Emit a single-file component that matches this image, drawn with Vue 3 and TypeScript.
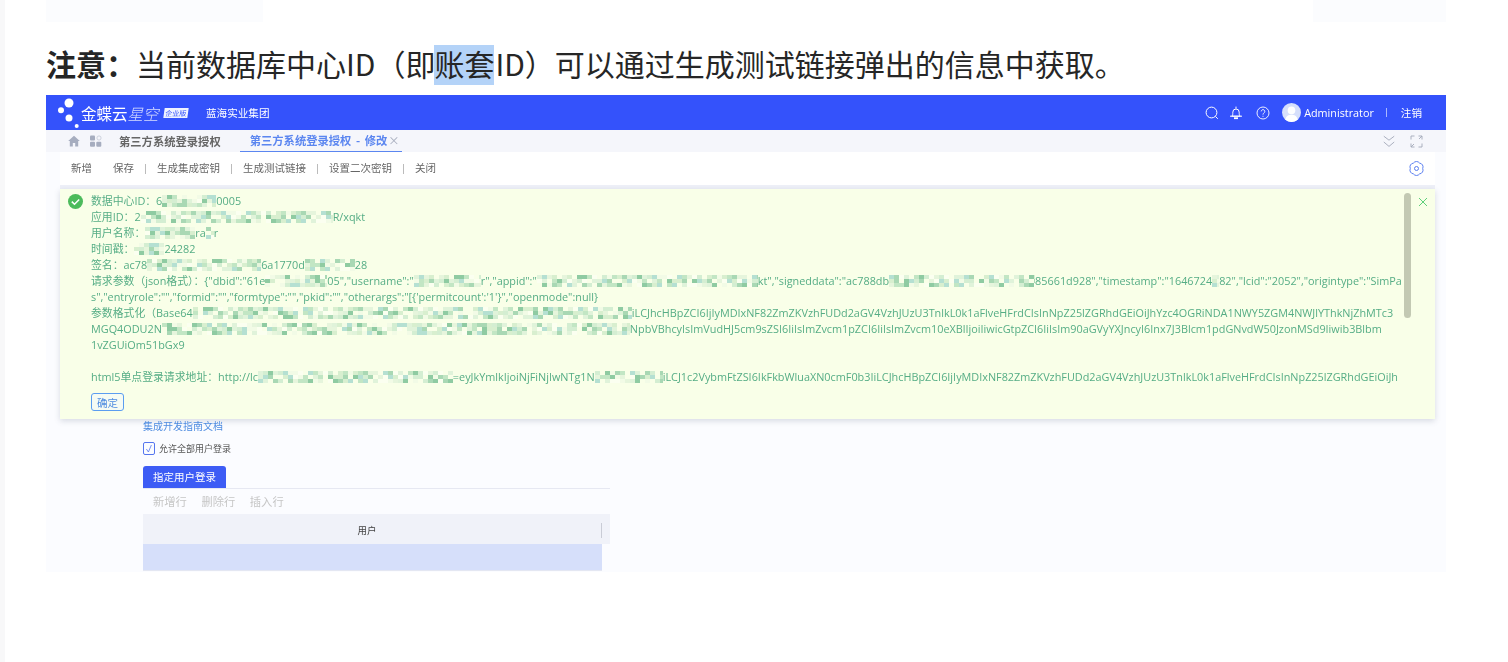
<script setup lang="ts">
type Seg = { t?: string; m?: number };
type Line = Seg[];

const lines: Line[] = [
  [{ t: '数据中心ID：6' }, { m: 54 }, { t: '0005' }],
  [{ t: '应用ID：2' }, { m: 192 }, { t: 'R/xqkt' }],
  [{ t: '用户名称：' }, { m: 50 }, { t: 'ra' }, { m: 8 }, { t: 'r' }],
  [{ t: '时间戳：' }, { m: 30 }, { t: '24282' }],
  [{ t: '签名：ac78' }, { m: 114 }, { t: '6a1770d' }, { m: 50 }, { t: '28' }],
  [{ t: '请求参数（json格式）：{"dbid":"61e' }, { m: 62 }, { t: '05","username":"' }, { m: 67 }, { t: 'r","appid":"' }, { m: 221 }, { t: 'kt","signeddata":"ac788db' }, { m: 146 }, { t: '85661d928","timestamp":"1646724' }, { m: 7 }, { t: '82","lcid":"2052","origintype":"SimPa' }],
  [{ t: 's","entryrole":"","formid":"","formtype":"","pkid":"","otherargs":"[{\'permitcount\':\'1\'}","openmode":null}' }],
  [{ t: '参数格式化（Base64' }, { m: 439 }, { t: 'iLCJhcHBpZCI6IjIyMDIxNF82ZmZKVzhFUDd2aGV4VzhJUzU3TnlkL0k1aFlveHFrdCIsInNpZ25lZGRhdGEiOiJhYzc4OGRiNDA1NWY5ZGM4NWJlYThkNjZhMTc3' }],
  [{ t: 'MGQ4ODU2N' }, { m: 468 }, { t: 'NpbVBhcyIsImVudHJ5cm9sZSI6IiIsImZvcm1pZCI6IiIsImZvcm10eXBlIjoiIiwicGtpZCI6IiIsIm90aGVyYXJncyI6Inx7J3Blcm1pdGNvdW50JzonMSd9Iiwib3Blbm' }],
  [{ t: '1vZGUiOm51bGx9' }],
  [{ t: ' ' }],
  [{ t: 'html5单点登录请求地址：http://lc' }, { m: 195 }, { t: '=eyJkYmlkIjoiNjFiNjIwNTg1N' }, { m: 68 }, { t: 'iLCJ1c2VybmFtZSI6IkFkbWluaXN0cmF0b3IiLCJhcHBpZCI6IjIyMDIxNF82ZmZKVzhFUDd2aGV4VzhJUzU3TnlkL0k1aFlveHFrdCIsInNpZ25lZGRhdGEiOiJh' }],
];

const tones = ['#a9d8b4', '#d4eed2', '#8fcba2', '#fbfff0', '#e6f5dc', '#b5e0d2', '#d8efcf', '#f9ffe8', '#c2e6c4', '#f2fbe6', '#f9ffe8', '#e0f3da'];

function mosaic(width: number, seed: number) {
  let x = seed * 131 + width * 17 + 5;
  const next = () => {
    x = (x * 9301 + 49297) % 233280;
    return tones[(x >> 4) % tones.length];
  };
  const row = () => {
    const stops: string[] = [];
    for (let p = 0; p < width; p += 5) {
      const c = next();
      stops.push(`${c} ${p}px ${p + 5}px`);
    }
    return `linear-gradient(90deg, ${stops.join(', ')})`;
  };
  return {
    width: `${width}px`,
    backgroundImage: `${row()}, ${row()}, ${row()}`,
  };
}

const tools = ['生成集成密钥', '生成测试链接', '设置二次密钥', '关闭'];
</script>

<template>
  <div class="page">
    <div class="strip"></div>
    <main class="main">
      <div class="stubs">
        <div class="stub stub-a"></div>
        <div class="stub stub-b"></div>
      </div>
      <p class="note"><b>注意：</b>当前数据库中心ID（即<span class="sel">账套</span>ID）可以通过生成测试链接弹出的信息中获取。</p>

      <section class="shot">
        <header class="top">
          <svg class="logo" width="26" height="35" viewBox="0 0 26 35" fill="#fff">
            <circle cx="11" cy="8" r="4.5" />
            <circle cx="3" cy="15.300" r="3" />
            <circle cx="11" cy="23" r="3.500" />
            <circle cx="18.700" cy="31" r="2" />
          </svg>
          <span class="brand">金蝶云<i>星空</i></span>
          <span class="edition">企业版</span>
          <span class="org">蓝海实业集团</span>
          <span class="grow"></span>
          <svg class="ic" width="14" height="14" viewBox="0 0 14 14" fill="none" stroke="#fff" stroke-width="1">
            <circle cx="6.500" cy="6.500" r="5.400" /><path d="M10.400 10.400 12.800 12.800" />
          </svg>
          <svg class="ic bell" width="14" height="14" viewBox="0 0 14 14" fill="none" stroke="#fff" stroke-width="1">
            <path d="M2.800 10.200c1-1 1-2 1-4a3.200 3.200 0 0 1 6.400 0c0 2 0 3 1 4zM1 10.200h12M7 .6v2" /><path d="M5 12.200h4" stroke-width="1.800" />
          </svg>
          <svg class="ic help" width="14" height="14" viewBox="0 0 14 14" fill="none" stroke="#fff" stroke-width=".9">
            <circle cx="7" cy="7" r="6" /><path d="M5.200 5.400a1.800 1.800 0 1 1 2.700 1.600C7.200 7.400 7 7.800 7 8.600M7 9.800v1" />
          </svg>
          <svg class="avatar" width="19" height="19" viewBox="0 0 18 18">
            <circle cx="9" cy="9" r="9" fill="#d6dffb" />
            <circle cx="9" cy="7" r="3.600" fill="#fff" />
            <path d="M3.200 15.800c.6-3.400 3-4.600 5.800-4.600s5.200 1.200 5.800 4.600A9 9 0 0 1 9 18a9 9 0 0 1-5.800-2.200z" fill="#fff" />
          </svg>
          <span class="admin">Administrator</span>
          <span class="top-sep"></span>
          <span class="logout">注销</span>
        </header>

        <nav class="tabs">
          <svg width="12" height="12" viewBox="0 0 12 12" fill="#a6adbf"><path d="M6 .8.200 6h1.600v5.400h3V8h2.400v3.400h3V6h1.600z" /></svg>
          <svg class="apps" width="12" height="12" viewBox="0 0 12 12" fill="#a6adbf">
            <rect x="0" y="0.500" width="5" height="5" rx="1" /><circle cx="9" cy="3" r="2.100" fill="none" stroke="#c4c9d6" stroke-width=".8" />
            <rect x="0" y="6.800" width="5" height="5" rx="1" /><rect x="6.300" y="6.800" width="5" height="5" rx="1" />
          </svg>
          <span class="tab">第三方系统登录授权</span>
          <span class="tab active">第三方系统登录授权 - 修改<em>×</em></span>
          <span class="grow"></span>
          <svg width="12" height="13" viewBox="0 0 12 13" fill="none" stroke="#a3a8b8" stroke-width=".9"><path d="m.8 1.200 5.200 4 5.200-4M.8 7l5.200 4.400L11.200 7" /></svg>
          <svg class="full" width="13" height="13" viewBox="0 0 13 13" fill="none" stroke="#a3a8b8" stroke-width=".9"><path d="M1 4.500V1h3.500M8.500 1H12v3.500M12 8.500V12H8.500M4.500 12H1V8.500M12 1 9 4M1 12l3-3" /></svg>
        </nav>

        <div class="body">
          <div class="toolbar">
            <span>新增</span>
            <span class="save">保存</span>
            <template v-for="tool in tools" :key="tool">
              <i class="sep"></i>
              <span>{{ tool }}</span>
            </template>
            <span class="grow"></span>
            <svg width="15" height="15" viewBox="0 0 15 15" fill="none" stroke="#5b7ff0" stroke-width="1">
              <path d="M13.700 7.500A3.800 3.800 0 0 1 10.600 12.870 3.800 3.800 0 0 1 4.400 12.870 3.800 3.800 0 0 1 1.300 7.500 3.800 3.800 0 0 1 4.400 2.130 3.800 3.800 0 0 1 10.600 2.130 3.800 3.800 0 0 1 13.700 7.500z" /><circle cx="7.500" cy="7.500" r="2" />
            </svg>
          </div>

          <div class="alert">
            <svg class="ok" width="15" height="15" viewBox="0 0 15 15">
              <circle cx="7.500" cy="7.500" r="7.500" fill="#4cbb5c" />
              <path d="m3.800 7.600 2.700 2.700 4.700-4.800" fill="none" stroke="#fff" stroke-width="1.500" />
            </svg>
            <div class="msg">
              <div class="msg-lines">
                <div v-for="(line, i) in lines" :key="i" class="line">
                  <template v-for="(seg, j) in line" :key="j">
                    <span v-if="seg.m" class="mosaic" :style="mosaic(seg.m, i * 10 + j)"></span>
                    <template v-else>{{ seg.t }}</template>
                  </template>
                </div>
              </div>
              <button class="confirm" type="button">确定</button>
            </div>
            <div class="thumb"></div>
            <svg class="close" width="10" height="10" viewBox="0 0 10 10" fill="none" stroke="#5fd07a" stroke-width="1"><path d="m1 1 8 8M9 1 1 9" /></svg>
          </div>

          <div class="form">
            <a class="guide">集成开发指南文档</a>
            <label class="check">
              <svg width="12" height="13" viewBox="0 0 12 13" fill="none"><rect x=".5" y=".5" width="11" height="12" rx="1.500" stroke="#5576ef" /><path d="m3.400 7 2 3 3-7" stroke="#5576ef" stroke-width=".8" /></svg>
              允许全部用户登录
            </label>
            <div class="tabline"><span class="pill">指定用户登录</span></div>
            <div class="rowtools"><span>新增行</span><span>删除行</span><span>插入行</span></div>
            <div class="thead"><span>用户</span><i></i></div>
            <div class="selrow"></div>
          </div>
        </div>
      </section>
    </main>
  </div>
</template>

<style>
html, body { margin: 0; background: #fff; }
</style>

<style scoped>
.page {
  display: flex;
  width: 1508px;
  height: 662px;
  overflow: hidden;
  font-family: "Noto Sans CJK SC", "Noto Sans", sans-serif;
  color: #222;
}
.strip { width: 5px; background: #f8f8f9; flex: none; }
.main { width: 1400px; margin-left: 41px; flex: none; }
.stubs { display: flex; justify-content: space-between; }
.stub { height: 22px; background: #fbfcfe; }
.stub-a { width: 217px; }
.stub-b { width: 133px; }
.note {
  margin: 23px 0 10px;
  height: 40px;
  line-height: 36px;
  font-size: 30px;
  white-space: nowrap;
  color: #262626;
}
.note b { font-weight: 700; }
.sel { display: inline-block; height: 40px; line-height: 36px; margin: 0 1px 0 -1px; background: #b4d3f8; }

.shot { height: 477px; background: #fbfcff; overflow: hidden; filter: blur(.4px); }
.grow { flex: 1; }
.top {
  display: flex;
  align-items: center;
  height: 35px;
  padding: 0 24px 0 12px;
  background: #3452fb;
  color: #fff;
  box-sizing: border-box;
}
.logo { flex: none; margin-right: -3px; }
.brand { font-size: 15.500px; width: 78px; white-space: nowrap; flex: none; }
.brand i { font-weight: 300; opacity: .8; }
.edition {
  background: #f0f3ff;
  color: #3452fb;
  font-size: 7px;
  line-height: 10px;
  width: 24px;
  text-align: center;
  margin-left: 5px;
  transform: skewX(-8deg);
  flex: none;
}
.org { font-size: 10.600px; margin-left: 18px; white-space: nowrap; }
.bell { margin-left: 10px; }
.help { margin-left: 13px; }
.avatar { margin-left: 12px; }
.admin { font-family: "Open Sans", sans-serif; font-size: 10.800px; margin-left: 3px; }
.top-sep { width: 1px; height: 9px; background: #aab8fd; margin: 0 14px 0 12px; }
.logout { font-size: 10.600px; }

.tabs {
  display: flex;
  align-items: center;
  height: 22px;
  padding: 0 23px 0 22px;
  background: #f5f6fb;
  box-sizing: border-box;
}
.apps { margin-left: 10px; }
.tab { font-size: 11.300px; font-weight: 700; color: #666; margin-left: 17px; white-space: nowrap; }
.tab.active {
  color: #5b86f0;
  margin-left: 19px;
  height: 22px;
  line-height: 21px;
  padding: 0 2px 0 10px;
  border-bottom: 1px solid #5b86f0;
  box-sizing: border-box;
  word-spacing: 2px;
}
.tab em { font-style: normal; color: #a9afbf; margin-left: 1px; font-weight: 400; }
.full { margin-left: 15px; }

.body { padding: 0 11px 0 14px; height: 420px; }
.toolbar {
  display: flex;
  align-items: center;
  height: 33px;
  padding: 0 11px 0 11px;
  background: #fff;
  border-bottom: 4px solid #eef0f8;
  font-size: 10.500px;
  color: #666;
  white-space: nowrap;
}
.toolbar > span { position: relative; top: -1px; }
.toolbar .save { margin-left: 21px; }
.toolbar .sep { width: 1px; height: 10px; background: #bbb; margin: 0 11px; }

.alert {
  display: flex;
  height: 230px;
  background: #f9ffe8;
  box-shadow: 0 2px 6px rgba(70, 80, 110, .2);
  box-sizing: border-box;
  padding: 4px 8px 0 8px;
  color: #55ad85;
  font-size: 10.850px;
}
.ok { flex: none; margin-top: 1px; }
.msg { width: 1311px; margin-left: 8px; flex: none; overflow: hidden; }
.line { height: 16px; line-height: 16px; white-space: pre; font-family: "Open Sans", "Noto Sans CJK SC", sans-serif; overflow: hidden; }
.mosaic {
  display: inline-block;
  height: 12px;
  vertical-align: -2px;
  background-size: 100% 4px;
  background-position: 0 0, 0 4px, 0 8px;
  background-repeat: no-repeat;
}
.confirm {
  display: block;
  margin-top: 8px;
  width: 33px;
  height: 18px;
  padding: 0;
  border: 1px solid #5b9df0;
  border-radius: 3px;
  background: #f5fbf4;
  color: #4d8be0;
  font: 10.500px "Noto Sans CJK SC", sans-serif;
}
.thumb { width: 7px; height: 125px; background: #c3c9b3; border-radius: 4px; margin-left: 2px; flex: none; }
.close { margin-left: 7px; margin-top: 4px; flex: none; }

.form { padding-left: 83px; width: 550px; }
.guide { display: block; height: 13px; font-size: 10px; line-height: 13px; color: #4d8be0; }
.check { display: flex; align-items: center; gap: 4px; margin-top: 10px; height: 13px; font-size: 9px; color: #555; white-space: nowrap; }
.tabline { margin-top: 11px; height: 23px; width: 467px; border-bottom: 1px solid #e6e8f2; box-sizing: border-box; }
.pill {
  display: block;
  width: 83px;
  height: 22px;
  line-height: 22px;
  text-align: center;
  background: #3d5cf5;
  border-radius: 3px 3px 0 0;
  color: #fff;
  font-size: 10.500px;
}
.rowtools { display: flex; gap: 14.500px; height: 23px; padding: 0 0 2px 10px; align-items: center; font-size: 11.300px; color: #c6c6c6; }
.thead {
  position: relative;
  display: flex;
  align-items: center;
  justify-content: center;
  width: 467px;
  height: 30px;
  padding: 2px 19px 0 0;
  box-sizing: border-box;
  background: #f0f2f9;
  font-size: 9.500px;
  color: #444;
}
.thead i { position: absolute; right: 8px; top: 9px; width: 1px; height: 15px; background: #c9ccd6; }
.selrow { width: 459px; height: 26px; background: #d6dffa; border-bottom: 1px solid #e4e7f2; }
</style>
